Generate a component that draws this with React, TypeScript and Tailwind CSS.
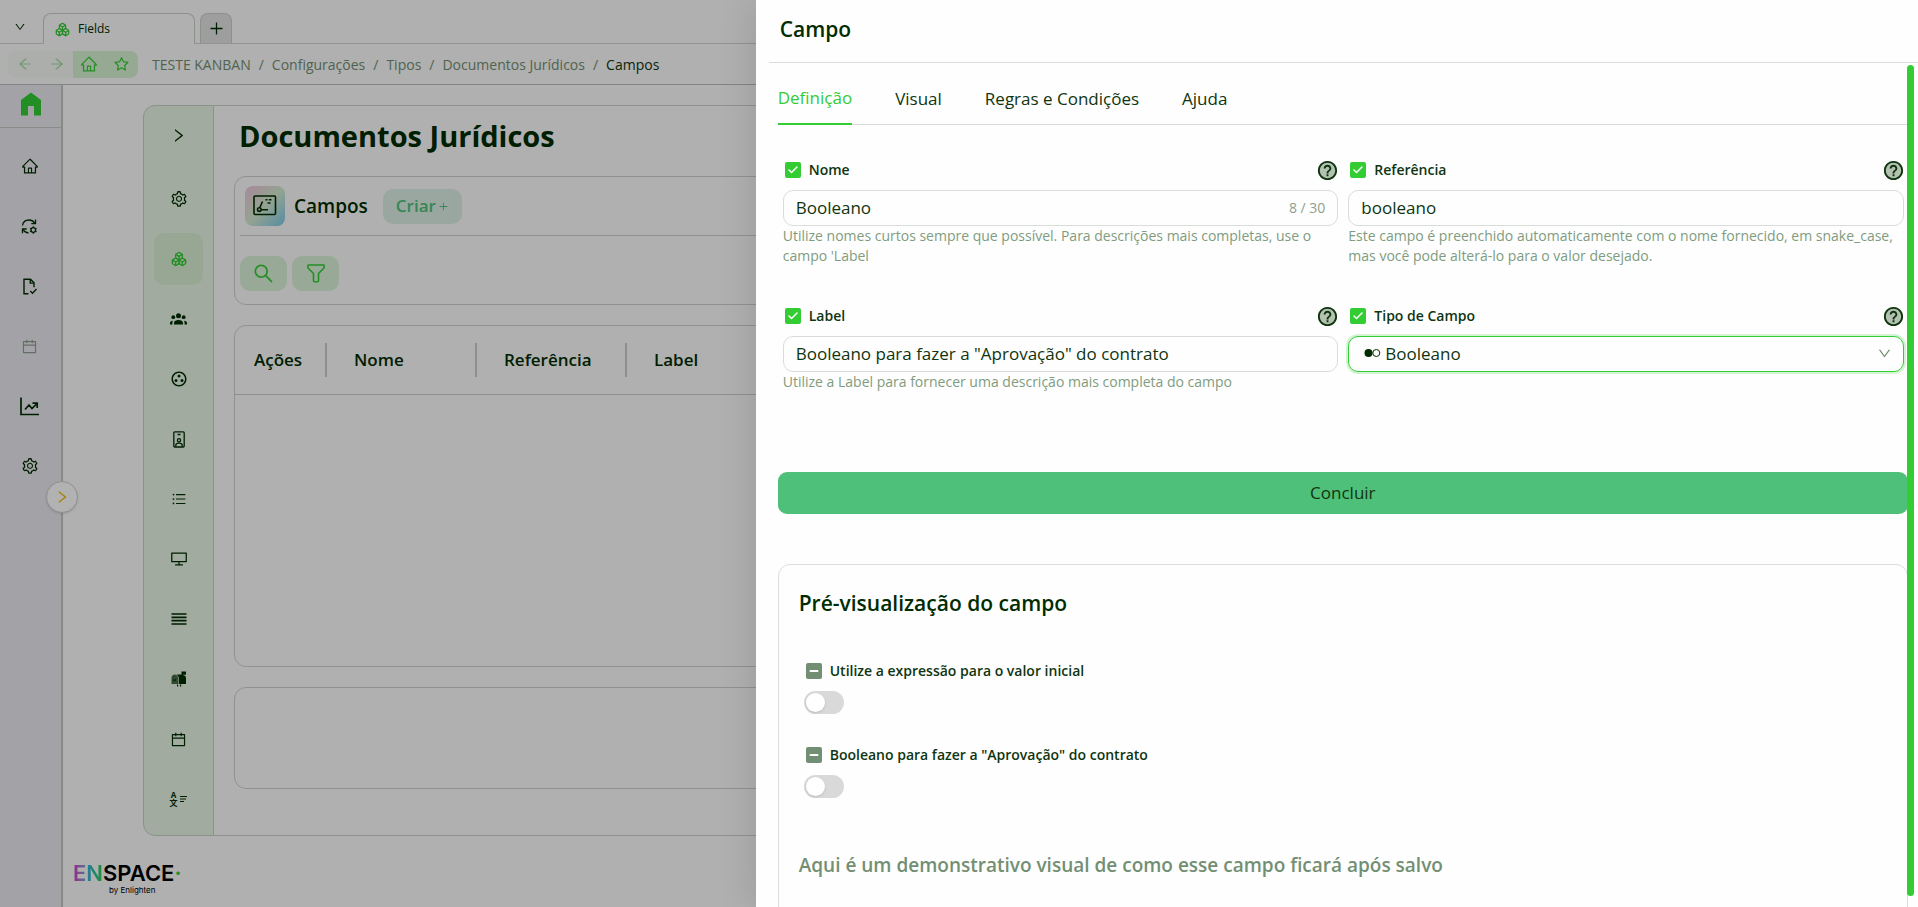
import type { InputHTMLAttributes, ReactNode } from 'react';
import {
  AiOutlineArrowLeft,
  AiOutlineArrowRight,
  AiOutlineCalendar,
  AiOutlineDesktop,
  AiOutlineDown,
  AiOutlineHome,
  AiOutlinePlus,
  AiOutlineRight,
  AiOutlineSearch,
  AiOutlineSetting,
  AiOutlineStar,
  AiOutlineUnorderedList,
} from 'react-icons/ai';
import { MdHelpOutline, MdOutlineGroupWork, MdReorder } from 'react-icons/md';
import { Boxes, Check, Minus } from 'lucide-react';

function HomeSolidIcon() {
  return (
    <svg width="22" height="24" viewBox="0 0 22 24" fill="#33cc33">
      <path d="M11 0.5 21 8v15.5h-7V14H8v9.5H1V8z" />
    </svg>
  );
}

function SyncGearIcon() {
  return (
    <svg width="17" height="17" viewBox="0 0 17 17" fill="none" stroke="currentColor" strokeWidth="1.3">
      <path d="M1.5 7.5C2 4 4.800 2 8 2c2.500 0 4.500 1.200 5.800 3.200" />
      <path d="M14.500 1.500v4.200h-4.200M1.500 15.200V11h4.200" />
      <path d="M2 11.500c1.200 2.200 3 3.200 5.500 3.500" />
      <circle cx="12.300" cy="12" r="2.300" />
      <path d="M12.300 8.300v1.400M12.300 14.300v1.400M9.100 10.200l1.200.7M14.300 13.100l1.200.7M9.100 13.800l1.200-.7M14.300 10.900l1.200-.7" />
    </svg>
  );
}

function FileCheckIcon() {
  return (
    <svg width="17" height="17" viewBox="0 0 17 17" fill="none" stroke="currentColor" strokeWidth="1.400">
      <path d="M7.500 15.800H3V1.200h6.500L13 4.800v4.400" />
      <path d="M9.300 1.400v3.700h3.600M9.300 13l2.200 2.200L15.500 11" />
    </svg>
  );
}

function ChartIcon() {
  return (
    <svg width="19" height="19" viewBox="0 0 19 19" fill="none" stroke="currentColor" strokeWidth="1.700">
      <path d="M1 .5V17.500h18" />
      <path d="M5 12.500 9 8l3 3.500L16.500 7M12.500 6.200h4.700V11" />
    </svg>
  );
}

function GroupIcon() {
  return (
    <svg width="17" height="12" viewBox="0 0 17 12" fill="currentColor">
      <circle cx="8.500" cy="2.800" r="2.500" />
      <circle cx="3.300" cy="4.200" r="1.900" />
      <circle cx="13.700" cy="4.200" r="1.900" />
      <path d="M4 11.500V10c0-1.900 2-2.900 4.500-2.900S13 8.100 13 10v1.500zM0 11.500V10c0-1.200.9-2 2.900-2.200-.4.700-.5 1.300-.5 2v1.700zM17 11.500V10c0-1.200-.9-2-2.900-2.200.4.700.5 1.300.5 2v1.700z" />
    </svg>
  );
}

function BadgeIcon() {
  return (
    <svg width="12" height="17" viewBox="0 0 12 17" fill="none" stroke="currentColor" strokeWidth="1.300">
      <rect x=".8" y=".8" width="10.400" height="15.200" rx="1" />
      <path d="M4.500 3.500h3M2.800 15.500v-1.300c0-1.200 1-2 3.200-2s3.200.8 3.200 2v1.300" />
      <circle cx="6" cy="9.300" r="1.600" />
    </svg>
  );
}

function FilterIcon() {
  return (
    <svg width="18" height="19" viewBox="0 0 18 19" fill="none" stroke="currentColor" strokeWidth="1.600" strokeLinejoin="round">
      <path d="M1.500 1h15c.4 0 .6.300.6.600v1.600c0 .5-.1.800-.4 1.100L11.500 9.500v7.300c0 .6-.4.900-.9.900H7.400c-.5 0-.9-.3-.9-.9V9.500L1.300 4.300C1 4 .9 3.700.9 3.200V1.600C.9 1.300 1.100 1 1.500 1z" />
    </svg>
  );
}

function MailboxIcon() {
  return (
    <svg width="16" height="16" viewBox="0 0 16 16" fill="currentColor">
      <path d="M4 3.500A3.500 3.500 0 0 0 .5 7v6H7V7a3.500 3.500 0 0 0-3-3.500z" opacity=".7" />
      <path d="M5.500 3.500h5V.5h4.500v3.300h-3v.2c2 .3 3 1.500 3 3V13H7.700V7c0-1.500-.8-2.800-2.200-3.500z" />
      <path d="M6 13.500h1.200v2H6zM9 13.500h1.200v2H9z" />
      <path d="M2 8.500h3v1.200H2z" />
    </svg>
  );
}

function TranslateIcon() {
  return (
    <span className="flex items-center gap-0.5">
      <span className="flex flex-col text-[8px] leading-[8px] font-bold">
        <span>A</span>
        <span>文</span>
      </span>
      <svg width="8" height="8" viewBox="0 0 8 8" stroke="currentColor" strokeWidth="1">
        <path d="M0 1.500h7M0 4h6M0 6.500h4" />
      </svg>
    </span>
  );
}

function FieldIcon() {
  return (
    <svg width="24" height="22" viewBox="0 0 24 22" fill="none" stroke="currentColor" strokeWidth="1.600">
      <rect x="1" y="1" width="21.500" height="18.500" rx="1" />
      <circle cx="6.300" cy="14.600" r="1.800" />
      <path d="M6.800 12.700 9.500 6.500M8.200 14.800H15M12.500 4.800h2M15.800 4.800h2.700M14.500 8h3" />
    </svg>
  );
}

const sideItems: { label: string; icon: ReactNode; muted?: boolean }[] = [
  { label: 'Início', icon: <AiOutlineHome size={18} /> },
  { label: 'Processos', icon: <SyncGearIcon /> },
  { label: 'Documentos', icon: <FileCheckIcon /> },
  { label: 'Agenda', icon: <AiOutlineCalendar size={17} />, muted: true },
  { label: 'Relatórios', icon: <ChartIcon /> },
  { label: 'Configurações', icon: <AiOutlineSetting size={18} /> },
];

const railItems: { label: string; icon: ReactNode; active?: boolean }[] = [
  { label: 'Geral', icon: <AiOutlineSetting size={18} /> },
  { label: 'Campos', icon: <Boxes size={16} strokeWidth={2} />, active: true },
  { label: 'Grupos', icon: <GroupIcon /> },
  { label: 'Equipes', icon: <MdOutlineGroupWork size={18} /> },
  { label: 'Perfis', icon: <BadgeIcon /> },
  { label: 'Listas', icon: <AiOutlineUnorderedList size={16} /> },
  { label: 'Telas', icon: <AiOutlineDesktop size={18} /> },
  { label: 'Linhas', icon: <MdReorder size={20} /> },
  { label: 'Mensagens', icon: <MailboxIcon /> },
  { label: 'Calendário', icon: <AiOutlineCalendar size={17} /> },
  { label: 'Traduções', icon: <TranslateIcon /> },
];

const crumbs = ['TESTE KANBAN', 'Configurações', 'Tipos', 'Documentos Jurídicos'];

function CheckBox({ id, children }: { id: string; children: string }) {
  return (
    <div className="flex items-center gap-2">
      <span className="relative flex">
        <input
          id={id}
          type="checkbox"
          defaultChecked
          className="size-4 appearance-none rounded-xs bg-[#33cc33]"
        />
        <Check size={12} strokeWidth={3} className="pointer-events-none absolute top-0.5 left-0.5 text-white" />
      </span>
      <label htmlFor={id} className="text-sm font-semibold text-[#0f350f]">
        {children}
      </label>
    </div>
  );
}

function Field({ id, label, hint, children }: { id: string; label: string; hint?: string; children: ReactNode }) {
  return (
    <div className="min-h-[146px]">
      <div className="mb-2 flex h-6 items-center justify-between pr-px pl-0.5">
        <CheckBox id={`${id}-on`}>{label}</CheckBox>
        <button aria-label={`Ajuda: ${label}`} className="flex size-[19px] items-center justify-center rounded-full bg-[#b3c2b1] text-[#0f350f]">
          <MdHelpOutline size={23} className="shrink-0" />
        </button>
      </div>
      {children}
      {hint && <p className="text-sm leading-5 text-[#7f9c7f]">{hint}</p>}
    </div>
  );
}

function TextInput({ counter, ...props }: InputHTMLAttributes<HTMLInputElement> & { counter?: string }) {
  return (
    <div className="flex h-9 items-center rounded-[10px] border border-[#d9ddd9] px-3">
      <input {...props} className="min-w-0 flex-1 bg-transparent text-[17px] text-[#0f350f] outline-none" />
      {counter && <span className="text-sm text-[#8ea08e]">{counter}</span>}
    </div>
  );
}

function PreviewSwitch({ id, label }: { id: string; label: string }) {
  return (
    <div className="h-[84px] px-[7px]">
      <div className="flex h-6 items-center gap-2">
        <span className="relative flex">
          <input
            id={`${id}-on`}
            type="checkbox"
            className="size-4 appearance-none rounded-xs bg-[#738f73]"
          />
          <Minus size={12} strokeWidth={4} className="pointer-events-none absolute top-0.5 left-0.5 text-white" />
        </span>
        <label htmlFor={id} className="text-sm font-semibold text-[#0f350f]">
          {label}
        </label>
      </div>
      <input
        id={id}
        type="checkbox"
        role="switch"
        className="-ml-0.5 mt-2 block h-[23px] w-10 appearance-none rounded-full bg-[#d9d9d9] p-0.5 before:block before:size-[19px] before:rounded-full before:bg-white before:shadow"
      />
    </div>
  );
}

function TopBar() {
  return (
    <header>
      <div className="flex h-11 items-end border-b border-[#d0d6d0] pl-2">
        <button aria-label="Abas" className="mb-2.5 flex w-6 justify-center">
          <AiOutlineDown size={12} />
        </button>
        <button className="ml-[11px] -mb-px flex h-[31px] w-[152px] items-center gap-2 rounded-t-lg border border-b-0 border-[#c8cec8] bg-[#fdfdfd] px-[11px] text-xs">
          <Boxes size={15} className="text-[#33cc33]" />
          Fields
        </button>
        <button aria-label="Nova aba" className="ml-[5px] flex h-[30px] w-8 items-center justify-center rounded-t-lg border border-b-0 border-[#c8cec8] bg-[#e2e2e2]">
          <AiOutlinePlus size={17} />
        </button>
      </div>
      <div className="flex h-[41px] items-center border-b border-[#b8c0b8] pl-2">
        <div className="flex h-[27px] overflow-hidden rounded-lg text-[#33cc33]">
          <button aria-label="Voltar" className="flex w-[33px] items-center justify-center bg-[#f7faf7] text-[#a4dba4]">
            <AiOutlineArrowLeft size={16} />
          </button>
          <button aria-label="Avançar" className="flex w-8 items-center justify-center bg-[#f7faf7] text-[#a4dba4]">
            <AiOutlineArrowRight size={16} />
          </button>
          <button aria-label="Página inicial" className="flex w-8 items-center justify-center bg-[#d6f2d3]">
            <AiOutlineHome size={18} />
          </button>
          <button aria-label="Favoritar" className="flex w-[33px] items-center justify-center bg-[#d6f2d3]">
            <AiOutlineStar size={17} />
          </button>
        </div>
        <nav className="ml-3.5 flex gap-2 pt-0.5 text-sm text-[#738f73]">
          {crumbs.map((crumb) => (
            <span key={crumb} className="flex gap-2">
              <a href="#">{crumb}</a>
              <span>/</span>
            </span>
          ))}
          <span className="text-[#0f350f]">Campos</span>
        </nav>
      </div>
    </header>
  );
}

function Sidebar() {
  return (
    <aside className="relative w-[63px] shrink-0 border-r-2 border-[#c0c8c0] bg-[#eaeaf0]">
      <a href="#" aria-label="Home" className="flex h-[43px] items-center justify-center border-b border-[#c4cbc4] pb-1">
        <HomeSolidIcon />
      </a>
      <nav className="flex flex-col pt-2">
        {sideItems.map((item) => (
          <button
            key={item.label}
            aria-label={item.label}
            className={`flex h-[60px] items-center justify-center pr-0.5 ${item.muted ? 'text-[#8fa08f]' : ''}`}
          >
            {item.icon}
          </button>
        ))}
      </nav>
      <button
        aria-label="Expandir menu"
        className="absolute top-[396px] -right-[17px] z-10 flex size-8 items-center justify-center rounded-full border border-[#d0d0d0] bg-white text-[#f0b800] shadow"
      >
        <AiOutlineRight size={16} />
      </button>
    </aside>
  );
}

function Logo() {
  return (
    <div className="flex h-[71px] shrink-0 flex-col px-2.5 pt-[26px]">
      <div className="font-['Inter'] text-[22px] leading-[22px] font-semibold text-black">
        <span className="bg-linear-to-r from-[#d413c0] via-[#39b4d6] to-[#33cc33] bg-clip-text text-transparent">EN</span>
        SPACE
        <span className="text-[#33cc33]">·</span>
      </div>
      <div className="pl-9 font-['Inter'] text-[8px] leading-3 text-black">by Enlighten</div>
    </div>
  );
}

function Workspace() {
  return (
    <div className="flex min-h-0 flex-1 flex-col rounded-r-xl border border-l-0 border-[#cdd3cd] px-5 pb-[46px]">
      <h1 className="pt-2 pb-[18px] pl-[5px] text-[29px] leading-[44px] font-bold">Documentos Jurídicos</h1>
      <section className="h-[129px] shrink-0 rounded-xl border border-[#cdd3cd] px-[5px]">
        <div className="flex h-[59px] items-center border-b border-[#cdd3cd] pl-[5px]">
          <span className="flex size-10 items-center justify-center rounded-lg bg-linear-to-br from-[#eec3dc] via-[#d3ead0] to-[#79c9e8]">
            <FieldIcon />
          </span>
          <h2 className="ml-[9px] text-[19px] font-semibold">Campos</h2>
          <button className="ml-[15px] flex h-[35px] w-[79px] items-center justify-center gap-0.5 rounded-[10px] bg-[#dcf0e5] text-[17px] font-semibold text-[#4fc07a]">
            Criar
            <AiOutlinePlus size={11} />
          </button>
        </div>
        <div className="flex gap-[5px] pt-5 text-[#33cc33]">
          <button aria-label="Buscar" className="flex h-[35px] w-[47px] items-center justify-center rounded-[10px] bg-[#dbf2d8]">
            <AiOutlineSearch size={23} />
          </button>
          <button aria-label="Filtrar" className="flex h-[35px] w-[47px] items-center justify-center rounded-[10px] bg-[#dbf2d8]">
            <FilterIcon />
          </button>
        </div>
      </section>
      <section className="mt-5 flex-1 rounded-xl border border-[#cdd3cd]">
        <table className="w-full table-fixed text-left text-[17px]">
          <thead>
            <tr className="h-[68px] border-b border-[#c8d0d0]">
              <th className="w-[92px] font-semibold">
                <div className="border-r-2 border-[#c8d0c8] pl-[19px] leading-[34px]">Ações</div>
              </th>
              <th className="w-[150px] font-semibold">
                <div className="border-r-2 border-[#c8d0c8] pl-[27px] leading-[34px]">Nome</div>
              </th>
              <th className="w-[150px] font-semibold">
                <div className="border-r-2 border-[#c8d0c8] pl-[27px] leading-[34px]">Referência</div>
              </th>
              <th className="pl-[27px] font-semibold">Label</th>
            </tr>
          </thead>
        </table>
      </section>
      <section className="mt-5 h-[102px] shrink-0 rounded-xl border border-[#cdd3cd]" />
    </div>
  );
}

function Drawer() {
  return (
    <aside className="absolute inset-y-0 right-0 z-30 flex w-[60.6%] flex-col overflow-hidden bg-[#fefefe] shadow-[-6px_0_32px_rgba(0,0,0,0.1)]">
      <div className="ml-[13px] flex h-[63px] shrink-0 items-center border-b border-[#d9ddd9] pb-0.5 pl-[11px]">
        <h2 className="text-[21px] font-semibold">Campo</h2>
      </div>
      <div className="min-h-0 flex-1 overflow-hidden pr-2.5 pl-[22px]">
        <nav role="tablist" className="flex h-[62px] gap-[43px] border-b border-[#d9ddd9] pt-2.5 text-[17px] text-[#0f350f]">
          <button role="tab" aria-selected="true" className="-mb-px border-b-2 border-[#33cc33] text-[#33cc33]">
            Definição
          </button>
          <button role="tab">Visual</button>
          <button role="tab">Regras e Condições</button>
          <button role="tab">Ajuda</button>
        </nav>

        <div className="grid grid-cols-2 gap-x-2.5 pt-[33px] pr-1 pl-[5px]">
          <Field
            id="nome"
            label="Nome"
            hint="Utilize nomes curtos sempre que possível. Para descrições mais completas, use o campo 'Label"
          >
            <TextInput aria-label="Nome" defaultValue="Booleano" counter="8 / 30" />
          </Field>
          <Field
            id="referencia"
            label="Referência"
            hint="Este campo é preenchido automaticamente com o nome fornecido, em snake_case, mas você pode alterá-lo para o valor desejado."
          >
            <TextInput aria-label="Referência" defaultValue="booleano" />
          </Field>
          <Field id="label" label="Label" hint="Utilize a Label para fornecer uma descrição mais completa do campo">
            <TextInput aria-label="Label" defaultValue={'Booleano para fazer a "Aprovação" do contrato'} />
          </Field>
          <Field id="tipo" label="Tipo de Campo">
            <div className="relative">
              <select
                aria-label="Tipo de Campo"
                className="h-9 w-full appearance-none rounded-[10px] border border-[#33cc33] bg-transparent pl-9 text-[17px] text-[#0f350f] shadow-[0_0_0_2px_#d3f3d3] outline-none"
              >
                <option>Booleano</option>
              </select>
              <svg width="17" height="10" viewBox="0 0 17 10" className="pointer-events-none absolute top-3 left-4">
                <circle cx="4.500" cy="5" r="4" fill="#002c00" />
                <circle cx="12.300" cy="5" r="3.500" fill="none" stroke="#002c00" />
              </svg>
              <AiOutlineDown size={15} className="pointer-events-none absolute top-2.5 right-3 text-[#738f73]" />
            </div>
          </Field>
        </div>

        <button className="mt-[22px] h-[42px] w-full rounded-[9px] bg-[#4fc07a] text-[17px] text-[#0f350f]">
          Concluir
        </button>

        <section className="mt-[50px] h-[400px] rounded-xl border border-[#d9e0d9] px-5 pt-[18px]">
          <h3 className="mb-9 text-[21px] leading-10 font-semibold">Pré-visualização do campo</h3>
          <PreviewSwitch id="expressao" label="Utilize a expressão para o valor inicial" />
          <PreviewSwitch id="aprovacao" label={'Booleano para fazer a "Aprovação" do contrato'} />
          <p className="mt-[22px] text-[19px] leading-8 font-semibold text-[#738f73]">
            Aqui é um demonstrativo visual de como esse campo ficará após salvo
          </p>
        </section>
      </div>
      <div className="absolute top-[65px] right-1 bottom-[11px] w-[7px] rounded-full bg-[#33cc33]" />
    </aside>
  );
}

export default function App() {
  return (
    <div className="relative flex h-screen flex-col overflow-hidden bg-[#fcfcfc] font-['Open_Sans','Noto_Sans_CJK_SC',sans-serif] text-[#002c00]">
      <TopBar />
      <div className="flex min-h-0 flex-1">
        <Sidebar />
        <main className="flex min-w-0 flex-1 flex-col pt-5">
          <div className="flex min-h-0 flex-1 pr-5 pl-20">
            <nav className="flex w-[71px] shrink-0 flex-col items-center rounded-l-xl border border-[#c4d3c4] bg-[#e7f5e5]">
              <button aria-label="Expandir" className="mb-1 flex h-[59px] w-full shrink-0 items-center justify-center">
                <AiOutlineRight size={17} />
              </button>
              {railItems.map((item) => (
                <button
                  key={item.label}
                  aria-label={item.label}
                  className={`my-1 flex h-[52px] w-[49px] shrink-0 items-center justify-center rounded-[10px] ${
                    item.active ? 'bg-[#d8f0d5] text-[#33cc33]' : ''
                  }`}
                >
                  {item.icon}
                </button>
              ))}
            </nav>
            <Workspace />
          </div>
          <Logo />
        </main>
      </div>
      <div className="absolute inset-0 z-20 bg-black/30" />
      <Drawer />
    </div>
  );
}
